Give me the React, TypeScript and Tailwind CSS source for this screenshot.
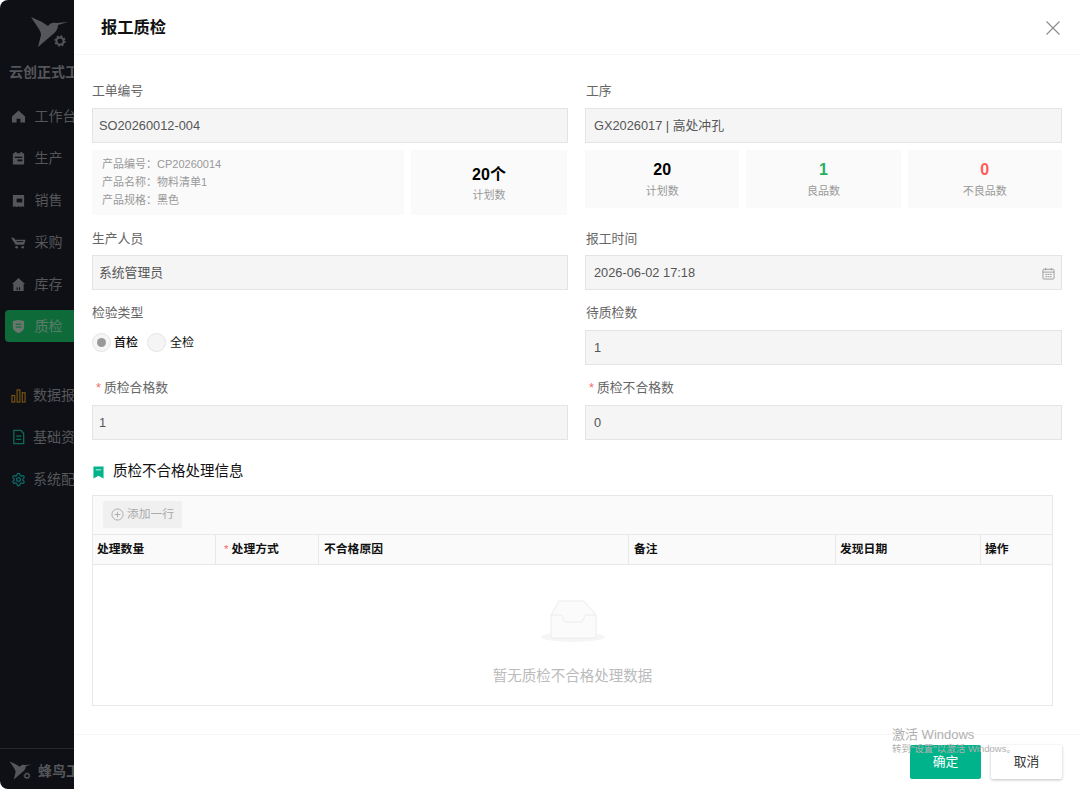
import React from "react";

function Bird({ className }: { className?: string }) {
  return (
    <svg viewBox="0 0 40 32" className={className} fill="none">
      <path d="M1 0 L12 5 L18 9 C20 6 23 5 26 6 L38 5 L28 8 C28 12 26 15 22 18 L8 30 L11 18 C11 13 5 7 1 0 Z" fill="#55565a" />
      <circle cx="30" cy="24" r="3.6" stroke="#55565a" strokeWidth="2" />
      <circle cx="30" cy="24" r="5" stroke="#55565a" strokeWidth="1.4" strokeDasharray="2 1.9" />
    </svg>
  );
}

function NavItem({ icon, label, active, wide }: { icon: React.ReactNode; label: string; active?: boolean; wide?: boolean }) {
  return (
    <div className={`ml-[5px] flex h-[32px] w-[180px] items-center rounded-[4px] pl-[6px] ${active ? "bg-[#0f6a3a]" : ""} ${wide ? "gap-[7px]" : "gap-[8.5px]"}`}>
      <span className="flex h-[14px] w-[15px] items-center justify-center">{icon}</span>
      <span className={`whitespace-nowrap text-[14px] ${active ? "text-[#5e7d6b]" : "text-[#55565a]"}`}>{label}</span>
    </div>
  );
}

const G = "#55565a";
const Home = () => (
  <svg viewBox="0 0 16 16" className="h-[15px] w-[15px]"><path d="M8 1.5 L15 8 V14.5 H10 V10.5 H6 V14.5 H1 V8 Z" fill={G} /></svg>
);
const Clip = () => (
  <svg viewBox="0 0 16 16" className="h-[15px] w-[15px]"><rect x="2" y="2.5" width="12" height="12" rx="1" fill={G} /><rect x="4" y="1" width="2" height="3" fill={G} /><rect x="10" y="1" width="2" height="3" fill={G} /><rect x="4" y="6" width="8" height="1.4" fill="#0e1015" /><rect x="7" y="9" width="5" height="2" fill="#0e1015" /></svg>
);
const Box = () => (
  <svg viewBox="0 0 16 16" className="h-[15px] w-[15px]"><path d="M2 2 H14 V15 L12 14 L10 15 L8 14 L6 15 L4 14 L2 15 Z" fill={G} /><rect x="6" y="6" width="6" height="4" fill="#0e1015" /></svg>
);
const Cart = () => (
  <svg viewBox="0 0 16 16" className="h-[15px] w-[16px]"><path d="M0 3 H3 L4.5 5 H15.5 L14 10.5 H5 Z" fill={G} /><rect x="6" y="6.5" width="7" height="1" fill="#0e1015" /><circle cx="6" cy="13" r="1.4" fill={G} /><circle cx="12.5" cy="13" r="1.4" fill={G} /></svg>
);
const Store = () => (
  <svg viewBox="0 0 16 16" className="h-[15px] w-[15px]"><path d="M8 1 L15 7.5 H13.5 V15 H2.5 V7.5 H1 Z" fill={G} /><rect x="6" y="11" width="1.2" height="3" fill="#0e1015" /><rect x="8.5" y="11" width="1.2" height="3" fill="#0e1015" /></svg>
);
const Shield = () => (
  <svg viewBox="0 0 16 16" className="h-[15px] w-[15px]"><path d="M2 2 L8 1 L14 2 V8.5 C14 12 11 14 8 15 C5 14 2 12 2 8.5 Z" fill="#69766e" /><rect x="5" y="5" width="6" height="1.2" fill="#0f6a3a" /><rect x="5" y="8" width="6" height="1.2" fill="#0f6a3a" /></svg>
);
const Bars = () => (
  <svg viewBox="0 0 16 16" className="h-[15px] w-[15px]" fill="none" stroke="#7a5510" strokeWidth="1.2"><rect x="1" y="8" width="3" height="7" /><rect x="6.5" y="2" width="3" height="13" /><rect x="12" y="5" width="3" height="10" /></svg>
);
const Doc = () => (
  <svg viewBox="0 0 16 16" className="h-[16px] w-[15px]" fill="none" stroke="#0c6b58" strokeWidth="1.4"><path d="M3 1 H10.5 L13.5 4 V15 H3 Z" /><path d="M5.5 7 H11 M5.5 10.5 H11" /></svg>
);
const Gear = () => (
  <svg viewBox="0 0 24 24" className="h-[15px] w-[15px]" fill="none" stroke="#0c6b6b" strokeWidth="2"><path d="M12.22 2h-.44a2 2 0 0 0-2 2v.18a2 2 0 0 1-1 1.73l-.43.25a2 2 0 0 1-2 0l-.15-.08a2 2 0 0 0-2.73.73l-.22.38a2 2 0 0 0 .73 2.73l.15.1a2 2 0 0 1 1 1.72v.51a2 2 0 0 1-1 1.74l-.15.09a2 2 0 0 0-.73 2.73l.22.38a2 2 0 0 0 2.73.73l.15-.08a2 2 0 0 1 2 0l.43.25a2 2 0 0 1 1 1.73V20a2 2 0 0 0 2 2h.44a2 2 0 0 0 2-2v-.18a2 2 0 0 1 1-1.73l.43-.25a2 2 0 0 1 2 0l.15.08a2 2 0 0 0 2.73-.73l.22-.39a2 2 0 0 0-.73-2.73l-.15-.08a2 2 0 0 1-1-1.74v-.5a2 2 0 0 1 1-1.74l.15-.09a2 2 0 0 0 .73-2.73l-.22-.38a2 2 0 0 0-2.73-.73l-.15.08a2 2 0 0 1-2 0l-.43-.25a2 2 0 0 1-1-1.73V4a2 2 0 0 0-2-2z" /><circle cx="12" cy="12" r="3" /></svg>
);

function Field({ label, value, required, right, tight, children }: { label: string; value?: string; required?: boolean; right?: boolean; tight?: boolean; children?: React.ReactNode }) {
  return (
    <div className="flex flex-col">
      <div className={`flex h-[18px] items-center pt-[2px] text-[12.8px] text-[#666666] ${required ? "pl-[4px]" : right ? "pl-[1px]" : ""}`}>
        {required && <span className="mr-[3px] text-[#f56c6c]">*</span>}
        {label}
      </div>
      {children ?? <Input value={value!} right={right} tight={tight} />}
    </div>
  );
}

function Input({ value, right, tight, children }: { value: string; right?: boolean; tight?: boolean; children?: React.ReactNode }) {
  return (
    <div className={`flex h-[35px] items-center justify-between border border-[#e4e4e4] bg-[#f5f5f5] pt-[1px] pr-[6px] text-[12.8px] text-[#555555] ${tight ? "mt-[8px]" : "mt-[9px]"} ${right ? "pl-[8px]" : "pl-[6px]"}`}>
      <span>{value}</span>
      {children}
    </div>
  );
}

function Stat({ value, label, color }: { value: string; label: string; color: string }) {
  return (
    <div className="flex h-[58px] flex-1 flex-col items-center justify-center bg-[#fafafa] pb-[1px]">
      <div className={`text-[16px] font-bold leading-[22px] ${color}`}>{value}</div>
      <div className="mt-[2px] text-[11px] leading-[16px] text-[#999999]">{label}</div>
    </div>
  );
}

const columns = [
  { label: "处理数量", w: "w-[123px]", pad: "pl-[4px]" },
  { label: "处理方式", w: "w-[103px]", pad: "pl-[8px]", req: true },
  { label: "不合格原因", w: "w-[310px]", pad: "pl-[5px]" },
  { label: "备注", w: "w-[207px]", pad: "pl-[5px]" },
  { label: "发现日期", w: "w-[145px]", pad: "pl-[4px]" },
  { label: "操作", w: "flex-1", pad: "pl-[4px]" },
];

export default function App() {
  return (
    <div
      className="relative flex h-[789px] w-[1080px] overflow-hidden bg-white"
      style={{ fontFamily: '"Liberation Sans","Noto Sans CJK SC",sans-serif' }}
    >
      {/* dimmed side menu */}
      <aside className="flex w-[74px] shrink-0 flex-col overflow-hidden rounded-l-[8px] bg-[#0e1015]">
        <div className="flex flex-col pt-[17px]">
          <Bird className="ml-[30px] h-[32px] w-[40px]" />
          <div className="mt-[13px] ml-[9px] whitespace-nowrap text-[14px] font-bold leading-[20px] text-[#55565a]">云创正式工厂</div>
        </div>
        <div className="mt-[18px] flex flex-col gap-[10px]">
          <NavItem icon={<Home />} label="工作台" />
          <NavItem icon={<Clip />} label="生产" />
          <NavItem icon={<Box />} label="销售" />
          <NavItem icon={<Cart />} label="采购" />
          <NavItem icon={<Store />} label="库存" />
          <NavItem icon={<Shield />} label="质检" active />
        </div>
        <div className="mt-[37px] flex flex-col gap-[10px]">
          <NavItem icon={<Bars />} label="数据报表" wide />
          <NavItem icon={<Doc />} label="基础资料" wide />
          <NavItem icon={<Gear />} label="系统配置" wide />
        </div>
        <div className="mt-auto flex h-[41px] items-center gap-[5px] border-t border-[#26282d] pt-[4px] pl-[9px]">
          <Bird className="h-[22px] w-[24px] shrink-0" />
          <span className="whitespace-nowrap text-[14px] font-bold text-[#55565a]">蜂鸟工厂</span>
        </div>
      </aside>

      {/* drawer */}
      <main className="flex min-w-0 flex-1 flex-col">
        <header className="flex h-[55px] shrink-0 items-center justify-between border-b border-[#f5f5f5] pt-[1px] pl-[27px] pr-[20px]">
          <h1 className="text-[16.3px] font-bold text-[#111111]">报工质检</h1>
          <svg viewBox="0 0 14 14" className="h-[14px] w-[14px]" fill="none" stroke="#8a8a8a" strokeWidth="1.1">
            <path d="M0.5 0.5 L13.5 13.5 M13.5 0.5 L0.5 13.5" />
          </svg>
        </header>

        <div className="flex min-h-0 flex-1 flex-col pl-[18px] pr-[18px] pt-[26px]">
          <div className="grid grid-cols-[476px_477px] gap-x-[17px]">
            <div className="flex flex-col">
              <Field label="工单编号" value="SO20260012-004" />
              <div className="mt-[7px] mr-[1px] flex gap-[7px]">
                <div className="flex h-[65px] w-[312px] flex-col justify-center bg-[#fafafa] pb-[1px] pl-[10px] text-[11px] leading-[18px] text-[#999999]">
                  <div>产品编号：CP20260014</div>
                  <div>产品名称：物料清单1</div>
                  <div>产品规格：黑色</div>
                </div>
                <div className="flex h-[65px] flex-1 flex-col items-center justify-center bg-[#fafafa] pt-[2px]">
                  <div className="text-[16px] font-bold leading-[22px] text-black">20个</div>
                  <div className="mt-[1px] text-[11px] leading-[16px] text-[#999999]">计划数</div>
                </div>
              </div>
            </div>
            <div className="flex flex-col">
              <Field label="工序" value="GX2026017 | 高处冲孔" right />
              <div className="mt-[7px] flex gap-[7px]">
                <Stat value="20" label="计划数" color="text-black" />
                <Stat value="1" label="良品数" color="text-[#27ae60]" />
                <Stat value="0" label="不良品数" color="text-[#ff5c5c]" />
              </div>
            </div>
          </div>

          <div className="mt-[14px] grid grid-cols-[476px_477px] gap-x-[17px]">
            <Field label="生产人员" value="系统管理员" tight />
            <Field label="报工时间" right>
              <Input value="2026-06-02 17:18" right tight>
                <svg viewBox="0 0 14 14" className="h-[13px] w-[13px]" fill="none" stroke="#999999" strokeWidth="1">
                  <rect x="1" y="2.5" width="12" height="10.5" rx="1" />
                  <path d="M1 5.5 H13 M4 1 V3.5 M10 1 V3.5 M3.5 8 H5.5 M6 8 H8 M8.5 8 H10.5 M3.5 10.5 H5.5 M6 10.5 H8 M8.5 10.5 H10.5" />
                </svg>
              </Input>
            </Field>
          </div>

          <div className="mt-[13px] grid grid-cols-[476px_477px] gap-x-[17px]">
            <Field label="检验类型">
              <div className="mt-[12px] flex h-[19px] items-center text-[12px] text-[#111111]">
                <span className="flex h-[19px] w-[19px] items-center justify-center rounded-full border border-[#e4e4e4] bg-[#f5f5f5]">
                  <span className="h-[9px] w-[9px] rounded-full bg-[#999999]" />
                </span>
                <span className="ml-[3px] font-medium">首检</span>
                <span className="ml-[9px] h-[19px] w-[19px] rounded-full border border-[#e4e4e4] bg-[#f5f5f5]" />
                <span className="ml-[4px]">全检</span>
              </div>
            </Field>
            <Field label="待质检数" value="1" right />
          </div>

          <div className="mt-[13px] grid grid-cols-[476px_477px] gap-x-[17px]">
            <Field label="质检合格数" value="1" required />
            <Field label="质检不合格数" value="0" required right />
          </div>

          <div className="mt-[23px] flex h-[18px] items-center gap-[9px]">
            <svg viewBox="0 0 12 14" className="ml-px h-[13px] w-[11px]">
              <path d="M0.5 0.5 H11.5 V13.5 L6 10.5 L0.5 13.5 Z" fill="#00b38a" />
              <rect x="3" y="3.5" width="6" height="1.2" fill="#ffffff" opacity="0.7" />
            </svg>
            <span className="text-[14.5px] font-normal text-[#111111]">质检不合格处理信息</span>
          </div>

          <div className="mt-[14px] mr-[9px] flex h-[211px] flex-col border border-[#e8e8e8]">
            <div className="flex h-[39px] shrink-0 items-center border-b border-[#e8e8e8] bg-[#fafafa] pb-[1px] pl-[10px]">
              <div className="flex h-[27px] w-[79px] items-center justify-center gap-[3px] rounded-[2px] bg-[#f0f0f0] text-[11.8px] text-[#aaaaaa]">
                <svg viewBox="0 0 14 14" className="h-[13px] w-[13px]" fill="none" stroke="#aaaaaa" strokeWidth="1">
                  <circle cx="7" cy="7" r="6" />
                  <path d="M7 4 V10 M4 7 H10" />
                </svg>
                添加一行
              </div>
            </div>
            <div className="flex h-[30px] shrink-0 border-b border-[#e8e8e8] bg-[#fafafa]">
              {columns.map((c, i) => (
                <div
                  key={c.label}
                  className={`flex items-center text-[11.8px] font-bold text-[#111111] ${c.w} ${c.pad} ${i < columns.length - 1 ? "border-r border-[#e8e8e8]" : ""}`}
                >
                  {c.req && <span className="mr-[3px] font-normal text-[#f56c6c]">*</span>}
                  {c.label}
                </div>
              ))}
            </div>
            <div className="flex flex-1 flex-col items-center pt-[35px]">
              <svg viewBox="0 0 64 42" className="h-[42px] w-[64px]" fill="none">
                <ellipse cx="32" cy="37" rx="32" ry="5" fill="#f5f5f5" />
                <path d="M10 15 L18 1 H43 L55 15 V36 a2 2 0 0 1 -2 2 H12 a2 2 0 0 1 -2 -2 Z" fill="#fbfbfb" stroke="#ececec" strokeWidth="1" />
                <path d="M10 15 H20 C22 15 22 22 25 22 H40 C43 22 43 15 45 15 H55" stroke="#ececec" strokeWidth="1" />
              </svg>
              <div className="mt-[24px] text-[14.5px] leading-[20px] text-[#bbbbbb]">暂无质检不合格处理数据</div>
            </div>
          </div>
        </div>

        <footer className="flex h-[55px] shrink-0 items-start justify-end gap-[10px] border-t border-[#f5f5f5] pr-[18px] pt-[10px]">
          <div className="flex h-[34px] w-[71px] items-center justify-center rounded-[2px] bg-[#00b38a] text-[12.8px] text-white">确定</div>
          <div className="flex h-[34px] w-[71px] items-center justify-center rounded-[2px] bg-white text-[12.8px] text-[#333333] shadow-[0_1px_3px_rgba(0,0,0,0.25)]">取消</div>
        </footer>
      </main>

      {/* Windows activation watermark */}
      <div className="pointer-events-none absolute left-[892px] top-[726px] text-[#b0b0b0]">
        <div className="text-[13px] leading-[17px]">激活 Windows</div>
        <div className="whitespace-nowrap text-[9.5px] leading-[12px]">转到"设置"以激活 Windows。</div>
      </div>
    </div>
  );
}
